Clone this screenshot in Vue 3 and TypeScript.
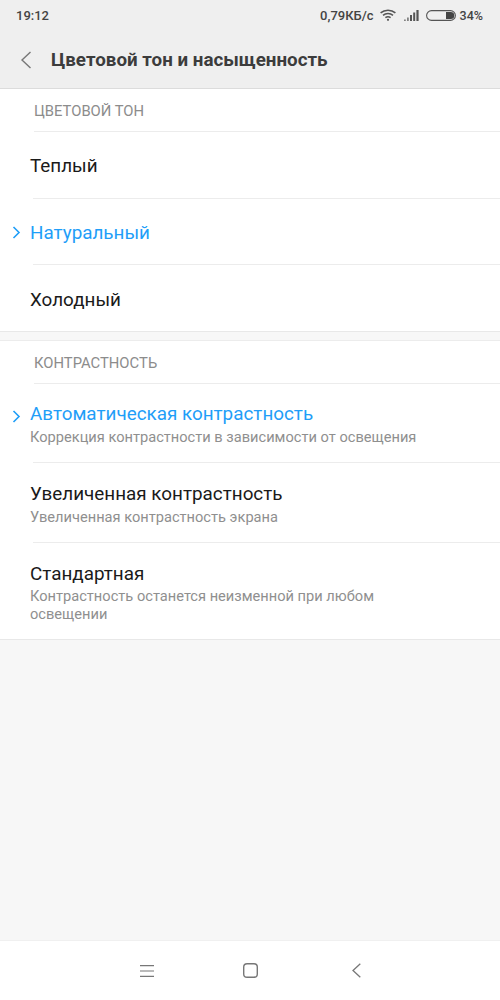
<template>
  <div class="screen">
    <header class="top">
      <div class="status">
        <span class="time">19:12</span>
        <div class="status-right">
          <span class="speed">0,79КБ/с</span>
          <svg class="wifi" width="16" height="12" viewBox="0 0 16 12" fill="none" stroke="#555" stroke-width="1.5">
            <path d="M.6 3.9C4.7 .2 11.3 .2 15.4 3.9" />
            <path d="M3 6.4C5.8 4 10.2 4 13 6.4" />
            <path d="M5.4 8.7C6.9 7.5 9.1 7.5 10.6 8.7" />
            <circle cx="8" cy="10.8" r="1.1" fill="#555" stroke="none" />
          </svg>
          <svg class="signal" width="16" height="11" viewBox="0 0 16 11" fill="#555">
            <rect x="0" y="9.5" width="1.8" height="1.5" opacity=".7" />
            <rect x="3" y="7.5" width="1.8" height="3.5" opacity=".7" />
            <rect x="6" y="5" width="2" height="6" />
            <rect x="9.2" y="2.5" width="2" height="8.5" />
            <rect x="12.4" y="0" width="2.2" height="11" />
          </svg>
          <svg class="battery" width="30" height="11" viewBox="0 0 30 11">
            <rect x=".6" y=".6" width="28.8" height="9.8" rx="4.9" fill="none" stroke="#555" stroke-width="1.1" />
            <path d="M20 2h4.8a3.5 3.5 0 0 1 0 7H20z" fill="#444" />
          </svg>
          <span class="pct">34%</span>
        </div>
      </div>
      <div class="title-row">
        <svg class="back" width="12" height="18" viewBox="0 0 12 18" fill="none" stroke="#777" stroke-width="1.4">
          <path d="M10.5 1L2 9l8.5 8" />
        </svg>
        <h1>Цветовой тон и насыщенность</h1>
      </div>
    </header>

    <section v-for="group in groups" :key="group.label" class="group">
      <div class="label">{{ group.label }}</div>
      <div
        v-for="item in group.items"
        :key="item.name"
        class="item"
        :class="{ active: item.active, sub: item.desc }"
      >
        <svg v-if="item.active" class="check" width="9" height="13" viewBox="0 0 9 13" fill="none" stroke="#1f9ef8" stroke-width="1.6">
          <path d="M1.5 1l5.5 5.5L1.5 12" />
        </svg>
        <div class="name">{{ item.name }}</div>
        <div v-if="item.desc" class="desc">{{ item.desc }}</div>
      </div>
    </section>

    <div class="fill"></div>

    <nav class="nav">
      <svg width="14" height="12" viewBox="0 0 14 12" fill="none" stroke="#777" stroke-width="1.2">
        <path d="M0 .6h14M0 6h14M0 11.4h14" />
      </svg>
      <svg class="home" width="15" height="15" viewBox="0 0 15 15" fill="none" stroke="#777" stroke-width="1.4">
        <rect x=".7" y=".7" width="13.6" height="13.6" rx="3.4" />
      </svg>
      <svg class="prev" width="9" height="15" viewBox="0 0 9 15" fill="none" stroke="#777" stroke-width="1.3">
        <path d="M8.3 .7L1 7.5l7.3 6.8" />
      </svg>
    </nav>
  </div>
</template>

<script setup lang="ts">
interface Item {
  name: string
  desc?: string
  active?: boolean
}

const groups: { label: string; items: Item[] }[] = [
  {
    label: 'ЦВЕТОВОЙ ТОН',
    items: [{ name: 'Теплый' }, { name: 'Натуральный', active: true }, { name: 'Холодный' }],
  },
  {
    label: 'КОНТРАСТНОСТЬ',
    items: [
      {
        name: 'Автоматическая контрастность',
        desc: 'Коррекция контрастности в зависимости от освещения',
        active: true,
      },
      { name: 'Увеличенная контрастность', desc: 'Увеличенная контрастность экрана' },
      { name: 'Стандартная', desc: 'Контрастность останется неизменной при любом освещении' },
    ],
  },
]
</script>

<style>
body {
  background: #f7f7f7;
}
</style>

<style scoped>
.screen {
  width: 500px;
  height: 1000px;
  display: flex;
  flex-direction: column;
  background: #f7f7f7;
  font-family: Roboto, "Noto Sans", sans-serif;
  overflow: hidden;
}

.top {
  height: 89px;
  box-sizing: border-box;
  background: #efefef;
  border-bottom: 1px solid #dcdcdc;
}

.status {
  height: 30px;
  padding: 0 17px 0 16px;
  display: flex;
  align-items: center;
  justify-content: space-between;
  font-size: 13px;
  font-weight: 500;
  color: #444;
}

.status-right {
  display: flex;
  align-items: center;
}

.wifi {
  margin-left: 6px;
}

.signal {
  margin-left: 8px;
}

.battery {
  margin-left: 6px;
}

.pct {
  margin-left: 4px;
  font-size: 12.5px;
}

.title-row {
  height: 58px;
  box-sizing: border-box;
  padding: 2px 0 0 20px;
  display: flex;
  align-items: center;
}

h1 {
  margin: 0 0 0 19px;
  font-size: 18.8px;
  font-weight: 700;
  color: #3c3c3c;
}

.group {
  background: #fff;
  border-bottom: 1px solid #e8e8e8;
}

.group + .group {
  margin-top: 8px;
  border-top: 1px solid #ececec;
}

.label {
  height: 43px;
  box-sizing: border-box;
  margin-left: 34px;
  padding-top: 14px;
  font-size: 14.8px;
  line-height: 16px;
  color: #8c8c8c;
  border-bottom: 1px solid #ececec;
}

.item {
  position: relative;
  height: 66px;
  box-sizing: border-box;
  padding: 2px 60px 0 30px;
  display: flex;
  flex-direction: column;
  justify-content: center;
}

.label + .item {
  height: 67px;
  padding-top: 1px;
}

.item:last-child {
  padding-top: 3px;
}

.item.sub {
  height: auto;
  min-height: 80px;
  padding-top: 20px;
  padding-bottom: 17px;
}

.label + .item.sub {
  height: auto;
  min-height: 79px;
  padding-top: 19px;
}

.item.sub:last-child {
  padding-bottom: 16px;
}

.item.sub:last-child .desc {
  margin-top: 2px;
}

.item + .item::before {
  content: "";
  position: absolute;
  top: -1px;
  left: 33px;
  right: 0;
  height: 1px;
  background: #ececec;
}

.name {
  font-size: 18.85px;
  line-height: 22px;
  color: #1a1a1a;
}

.active .name {
  color: #1f9ef8;
}

.desc {
  margin-top: 3px;
  font-size: 14.64px;
  line-height: 18px;
  color: #8f8f8f;
}

.check {
  position: absolute;
  left: 12px;
  top: 50%;
  margin-top: -6px;
}

.sub .check {
  top: 26px;
  margin-top: 0;
}

.fill {
  flex: 1;
}

.nav {
  height: 60px;
  background: #fff;
  border-top: 1px solid #f0f0f0;
  box-sizing: border-box;
  display: flex;
  align-items: center;
  padding-left: 140px;
}

.home {
  margin-left: 89px;
}

.prev {
  margin-left: 94px;
}
</style>
